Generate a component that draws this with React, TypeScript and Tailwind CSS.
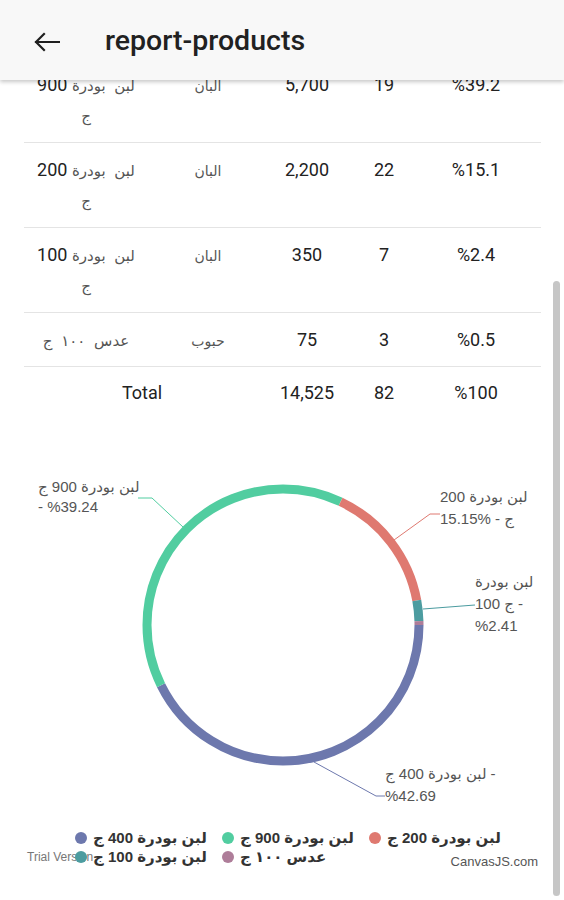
import React from "react";

type Row = {
  name: string;
  wrap?: string;
  category: string;
  amount: string;
  count: string;
  percent: string;
};

const rows: Row[] = [
  { name: "لبن بودرة", wrap: "900", category: "البان", amount: "5,700", count: "19", percent: "%39.2" },
  { name: "لبن بودرة", wrap: "200", category: "البان", amount: "2,200", count: "22", percent: "%15.1" },
  { name: "لبن بودرة", wrap: "100", category: "البان", amount: "350", count: "7", percent: "%2.4" },
];

const R = 136;
const C = 2 * Math.PI * R;

const slices = [
  { color: "#6D78AD", value: 42.69 },
  { color: "#51CDA0", value: 39.24 },
  { color: "#DF7970", value: 15.15 },
  { color: "#4C9CA0", value: 2.41 },
  { color: "#AE7D99", value: 0.51 },
];

const legend = [
  { color: "#6D78AD", label: "لبن بودرة 400 ج" },
  { color: "#51CDA0", label: "لبن بودرة 900 ج" },
  { color: "#DF7970", label: "لبن بودرة 200 ج" },
  { color: "#4C9CA0", label: "لبن بودرة 100 ج" },
  { color: "#AE7D99", label: "عدس ١٠٠ ج" },
];

function BackArrow() {
  return (
    <svg width="26" height="20" viewBox="0 0 26 20" fill="none">
      <path d="M2 10H25M2 10L10 2M2 10L10 18" stroke="#1f1f1f" strokeWidth="2.2" strokeLinecap="square" />
    </svg>
  );
}

function Donut() {
  let start = 0;
  return (
    <svg width="564" height="406" className="absolute left-0 top-0">
      {slices.map((s) => {
        const len = (s.value / 100) * C;
        const el = (
          <circle
            key={s.color}
            cx="283"
            cy="203"
            r={R}
            fill="none"
            stroke={s.color}
            strokeWidth="9"
            strokeDasharray={`${len} ${C}`}
            strokeDashoffset={-start}
          />
        );
        start += len;
        return el;
      })}
      <polyline points="138,76 152,76 183,105" fill="none" stroke="#51CDA0" strokeWidth="1" />
      <polyline points="394,118 430,92 440,92" fill="none" stroke="#DF7970" strokeWidth="1" />
      <polyline points="423,187 475,183" fill="none" stroke="#4C9CA0" strokeWidth="1.2" />
      <polyline points="314,340 376,374 385,374" fill="none" stroke="#6D78AD" strokeWidth="1" />
    </svg>
  );
}

const ar = "text-[15px] leading-[18px] text-[#555] [word-spacing:5px]";
const cols = "grid grid-cols-[124px_120px_78px_76px_1fr] text-center text-[18px] leading-[30px] text-[#222]";

export default function App() {
  return (
    <div className="relative w-[564px] h-[900px] overflow-hidden bg-white font-['Roboto','DejaVu_Sans',sans-serif]">
      <div className="absolute inset-x-0 top-0 z-20 h-[80px] bg-[#f8f8f8] shadow-[0_2px_4px_rgba(0,0,0,0.22)] flex items-center">
        <div className="ml-[34px] mt-[4px]">
          <BackArrow />
        </div>
        <h1 className="ml-[45px] mt-[2px] text-[28.5px] font-medium text-[#212121]">report-products</h1>
      </div>

      <div className="mt-[58px] mx-[24px] w-[517px]">
        {rows.map((r, i) => (
          <div key={i} className={`${cols} border-b border-[#e4e4e4] py-[12px]`}>
            <div className="h-[60px]">
              <span className={ar}>{r.name}</span> {r.wrap}
              <br />
              <span className={ar}>ج</span>
            </div>
            <div>
              <span className="text-[14px] leading-[18px] text-[#555]">{r.category}</span>
            </div>
            <div>{r.amount}</div>
            <div>{r.count}</div>
            <div className="pr-[11px]">{r.percent}</div>
          </div>
        ))}
        <div className={`${cols} border-b border-[#e4e4e4] h-[54px] items-center`}>
          <div>
            <span className={ar}>عدس ١٠٠ ج</span>
          </div>
          <div>
            <span className="text-[14px] leading-[18px] text-[#555]">حبوب</span>
          </div>
          <div>75</div>
          <div>3</div>
          <div className="pr-[11px]">%0.5</div>
        </div>
        <div className={`${cols} h-[51px] items-center`}>
          <div className="col-span-2 pr-[8px]">Total</div>
          <div>14,525</div>
          <div>82</div>
          <div className="pr-[11px]">%100</div>
        </div>
      </div>

      <div className="relative mt-[4px] h-[406px] font-['Liberation_Sans','DejaVu_Sans',sans-serif] text-[15px] text-[#555]">
        <Donut />
        <div className="absolute left-[38px] top-[55px] leading-[20px]">
          <div>لبن بودرة 900 ج</div>
          <div>- %39.24</div>
        </div>
        <div className="absolute left-[440px] top-[64px] leading-[22px]">
          <div>لبن بودرة 200</div>
          <div>15.15% - ج</div>
        </div>
        <div className="absolute left-[475px] top-[149px] leading-[22px]">
          <div>لبن بودرة</div>
          <div>100 ج -</div>
          <div>%2.41</div>
        </div>
        <div className="absolute left-[385px] top-[341px] leading-[22px]">
          <div>لبن بودرة 400 ج -</div>
          <div>%42.69</div>
        </div>
      </div>

      <div className="relative font-['Liberation_Sans','DejaVu_Sans',sans-serif]">
        <div className="absolute left-[27px] top-[21px] text-[12px] leading-[16px] text-[#777]">Trial Version</div>
        <div className="absolute right-[26px] top-[26px] text-[13px] leading-[16px] text-[#555]">CanvasJS.com</div>
        <div className="relative ml-[75px] grid grid-cols-[147px_147px_147px] text-[15px] font-semibold leading-[19px] text-[#333]">
          {legend.map((l) => (
            <div key={l.label} className="flex items-center gap-[6px]">
              <span className="h-[12px] w-[12px] shrink-0 rounded-full" style={{ backgroundColor: l.color }} />
              <span>{l.label}</span>
            </div>
          ))}
        </div>
      </div>

      <div className="absolute right-[4px] top-[281px] h-[615px] w-[7px] rounded-full bg-[#c6c6c6]" />
    </div>
  );
}
